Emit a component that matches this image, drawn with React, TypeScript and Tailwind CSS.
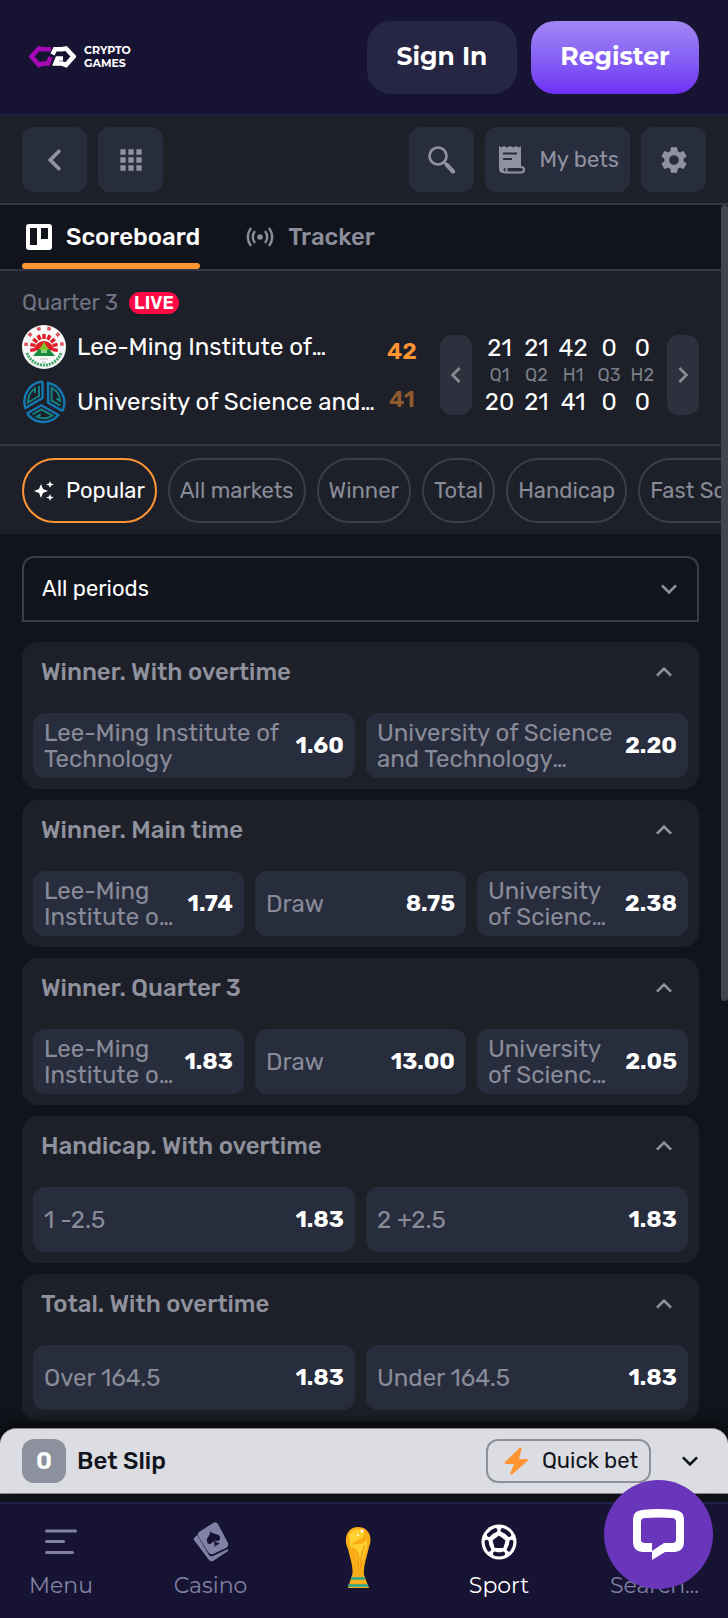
import { useState, type ReactNode } from 'react';
import clsx from 'clsx';
import {
  MdChevronLeft, MdApps, MdSettings,
  MdKeyboardArrowDown, MdKeyboardArrowUp, MdChevronRight,
} from 'react-icons/md';

type Outcome = { name: string; odds: string };
type Market = { title: string; outcomes: Outcome[] };

const HOME = 'Lee-Ming Institute of Technology';
const AWAY = 'University of Science and Technology Taipei';

const MARKETS: Market[] = [
  { title: 'Winner. With overtime', outcomes: [{ name: HOME, odds: '1.60' }, { name: AWAY, odds: '2.20' }] },
  { title: 'Winner. Main time', outcomes: [{ name: HOME, odds: '1.74' }, { name: 'Draw', odds: '8.75' }, { name: AWAY, odds: '2.38' }] },
  { title: 'Winner. Quarter 3', outcomes: [{ name: HOME, odds: '1.83' }, { name: 'Draw', odds: '13.00' }, { name: AWAY, odds: '2.05' }] },
  { title: 'Handicap. With overtime', outcomes: [{ name: '1 -2.5', odds: '1.83' }, { name: '2 +2.5', odds: '1.83' }] },
  { title: 'Total. With overtime', outcomes: [{ name: 'Over 164.5', odds: '1.83' }, { name: 'Under 164.5', odds: '1.83' }] },
];

const PERIODS = [
  { label: 'Q1', home: 21, away: 20 },
  { label: 'Q2', home: 21, away: 21 },
  { label: 'H1', home: 42, away: 41 },
  { label: 'Q3', home: 0, away: 0 },
  { label: 'H2', home: 0, away: 0 },
];

const FILTERS = ['Popular', 'All markets', 'Winner', 'Total', 'Handicap', 'Fast Score'];

function Logo() {
  return (
    <svg viewBox="0 0 48 22" className="w-12 h-[22px]" fill="none" strokeWidth="4.600">
      <path d="M23 3.300H15L11 2.500L3.500 10.500L11 19L15 17.500H20L22.500 11" stroke="#a507b5" />
      <path d="M24.500 8.500L27 3.300H34L38 2.500L45.500 10.500L38 19L34 17.500H27.500L29.500 12.500H35" stroke="#fff" />
    </svg>
  );
}

function HomeCrest() {
  return (
    <svg viewBox="0 0 44 44" className="size-11 shrink-0">
      <circle cx="22" cy="22" r="22" fill="#f7f7f7" />
      <path d="M4 21A18 18 0 0 1 40 21" fill="none" stroke="#dd5560" strokeWidth="3.500" strokeDasharray="3.500 7" />
      <path d="M5 28A18 18 0 0 0 39 28" fill="none" stroke="#3ba365" strokeWidth="3" strokeDasharray="2 1" />
      <path d="M12 26A10 10 0 1 1 32 26L27 25A5.500 5.500 0 0 0 17 25Z" fill="#e01b24" />
      {[-100, -75, -50, -25, 0, 25, 50, 75, 100].map((angle) => (
        <rect key={angle} x="20.300" y="9" width="3.400" height="5" fill="#e01b24" transform={`rotate(${angle} 22 23)`} />
      ))}
      <path d="M22 17L30 30H14Z" fill="#7fc42c" />
      <path d="M11 31L17 24L22 27L27 24L33 31Z" fill="#178a3c" />
      <path d="M19 25H25V28H19Z" fill="#8fd08f" />
      <path d="M18 34H26M20 37H24" stroke="#b9bec2" strokeWidth="1" />
    </svg>
  );
}

function AwayCrest() {
  return (
    <svg viewBox="0 0 44 44" className="size-11 shrink-0" fill="none" strokeWidth="2.400">
      {[0, 120, 240].map((angle) => (
        <g key={angle} transform={`rotate(${angle} 22 22)`}>
          <path d="M20.500 1.500V18L3.500 28A20 20 0 0 1 20.500 1.500" stroke="#1478b4" />
          <path d="M17 6V16L6 22.500A16 16 0 0 1 13 8.500V13" stroke="#14807f" strokeWidth="2" />
        </g>
      ))}
    </svg>
  );
}

function SearchIcon() {
  return (
    <svg viewBox="0 0 28 28" className="size-7" fill="none" stroke="currentColor" strokeLinecap="round">
      <circle cx="10" cy="10" r="8.500" strokeWidth="2.600" />
      <path d="M16 16L19 19" strokeWidth="2.600" />
      <path d="M19 19L25 25.500" strokeWidth="4.200" />
    </svg>
  );
}

function BetsIcon() {
  return (
    <svg viewBox="0 0 26 28" className="w-[26px] h-7 shrink-0">
      <path d="M0 0L2.500 1.500L5 0L8 1.500L11 0L14 1.500L17 0L19.500 1.500L22 0V20H8Q6 20 6 22V27H4Q0 27 0 22Z" fill="currentColor" />
      <path d="M4 7.500H18M4 13H13" stroke="#282d3d" strokeWidth="2" />
      <rect x="3.500" y="21" width="21.500" height="5.500" rx="2.700" fill="#282d3d" stroke="currentColor" strokeWidth="2" />
      <path d="M7.500 21V27" stroke="currentColor" strokeWidth="2" />
    </svg>
  );
}

function BoardIcon() {
  return (
    <svg viewBox="0 0 26 26" className="size-[26px]">
      <rect width="26" height="26" rx="3" fill="currentColor" />
      <path d="M4 4H11V21H4ZM15 4H22V15H15Z" fill="#11141c" />
    </svg>
  );
}

function TrackerIcon() {
  return (
    <svg viewBox="0 0 28 20" className="w-7 h-5" fill="none" stroke="currentColor" strokeWidth="2.400">
      <circle cx="14" cy="10" r="2.800" fill="currentColor" stroke="none" />
      <path d="M5 1Q-1.500 10 5 19M9 4Q4.500 10 9 16M19 4Q23.500 10 19 16M23 1Q29.500 10 23 19" />
    </svg>
  );
}

function SparkIcon() {
  return (
    <svg viewBox="0 0 20 20" className="size-5" fill="currentColor">
      <path d="M7 3L9 8L14 10L9 12L7 17L5 12L0 10L5 8ZM16 0L17 2.500L20 3.500L17 4.500L16 7L15 4.500L12 3.500L15 2.500ZM16 13L17 15.500L20 16.500L17 17.500L16 20L15 17.500L12 16.500L15 15.500Z" />
    </svg>
  );
}

function MenuIcon() {
  return (
    <svg viewBox="0 0 32 26" className="w-8 h-[26px]" stroke="currentColor" strokeWidth="3" strokeLinecap="round">
      <path d="M1.500 2H30.500M1.500 12.500H18.500M1.500 23.500H27.500" />
    </svg>
  );
}

function CasinoIcon() {
  return (
    <svg viewBox="0 0 36 40" className="w-9 h-10" fill="currentColor">
      <path d="M4 13L1 16Q0 17 1 18L16 38Q18 40 20 39L35 29V27L20 34Q17 35 16 33Z" />
      <path d="M6 10L20 1Q23-1 25 2L35 21Q36 24 33 26L20 32Q17 33 15 30L5 14Q4 12 6 10Z" />
      <path d="M17 9C20 13 26 11 27 15C28 19 24 20 22 18C22 20 24 21 27 21L21 25C22 23 22 21 20 19C19 23 14 23 14 19C13 15 18 14 17 9Z" fill="#161432" />
    </svg>
  );
}

function CupIcon() {
  return (
    <svg viewBox="0 0 26 64" className="w-[26px] h-16">
      <path d="M3 23C-2 13 2 1 13 1C24 1 28 12 24 21C22 31 18 40 19 50H7C9 42 5 32 3 23Z" fill="#f9ad16" />
      <path d="M7 49H19L24 62H3Z" fill="#f9ad1c" />
      <path d="M6 52.500H20M3 59.500H23" stroke="#26a68a" strokeWidth="2.500" />
      <path d="M4 9C8 1 19 3 19 8C19 14 9 13 7 19C12 17 18 20 22 13L22 22L14 44C16 33 10 26 5 20Z" fill="#ffd02e" />
      <path d="M7 22C13 25 15 30 13 44M20 20C15 27 17 34 15 44" fill="none" stroke="#f59a14" strokeWidth="1.500" />
      <circle cx="17" cy="5" r="1.500" fill="#fff" />
      <circle cx="13" cy="9" r="1" fill="#fff" />
    </svg>
  );
}

function BallIcon() {
  return (
    <svg viewBox="0 0 36 36" className="size-9">
      <circle cx="18" cy="18" r="17.500" fill="currentColor" />
      <path d="M18 12L24 16.500L22 23.500H14L12 16.500Z" fill="#161432" stroke="#161432" strokeLinejoin="round" />
      {[0, 72, 144, 216, 288].map((angle) => (
        <path key={angle} d="M14 29.700Q18 31 22 29.700" transform={`rotate(${angle} 18 18)`} fill="none" stroke="#161432" strokeWidth="4.200" strokeLinecap="round" />
      ))}
    </svg>
  );
}

function ToolButton({ label, children }: { label: string; children: ReactNode }) {
  return (
    <button aria-label={label} className="size-[65px] shrink-0 rounded-xl bg-[#282d3d] text-[#9092a0] flex items-center justify-center">
      {children}
    </button>
  );
}

function Team({ name, crest }: { name: string; crest: ReactNode }) {
  return (
    <div className="flex items-center gap-[11px] h-11">
      {crest}
      <span className="flex-1 line-clamp-1 text-white">{name}</span>
    </div>
  );
}

function MarketCard({ market }: { market: Market }) {
  const [open, setOpen] = useState(true);
  return (
    <section className="rounded-2xl bg-[#1d2029] px-[11px] pb-[11px]">
      <h2>
        <button
          aria-expanded={open}
          onClick={() => setOpen(!open)}
          className="flex w-full items-center justify-between h-[60px] px-2 font-medium text-[#8f919d]"
        >
          {market.title}
          <MdKeyboardArrowUp className={clsx('size-8', !open && 'rotate-180')} />
        </button>
      </h2>
      {open && (
        <div className="flex gap-[11px] pt-[11px]">
          {market.outcomes.map((o, i) => (
            <button key={i} className="flex flex-1 min-w-0 items-center justify-between gap-2 h-[65px] rounded-xl bg-[#282d3d] px-[11px] text-left">
              <span className="line-clamp-2 leading-[26px] text-[#898b98]">{o.name}</span>
              <span className="text-[23px] font-bold text-white">{o.odds}</span>
            </button>
          ))}
        </div>
      )}
    </section>
  );
}

function NavItem({ label, active, children }: { label: string; active?: boolean; children?: ReactNode }) {
  return (
    <a href="#" className={clsx('flex flex-col items-center gap-2.5', active ? 'text-white' : 'text-[#8180a6]')}>
      <span className="h-10 flex items-center">{children}</span>
      <span className="leading-7">{label}</span>
    </a>
  );
}

export default function App() {
  const [filter, setFilter] = useState('Popular');

  return (
    <div className="h-screen flex flex-col overflow-hidden bg-[#11141c] font-['Rubik','Roboto',sans-serif] text-2xl">
      <header className="flex items-center justify-between h-[116px] shrink-0 pl-7 pr-[29px] bg-[#161432] border-b-2 border-[#211f4b] font-['Montserrat','Inter',sans-serif]">
        <a href="#" className="flex items-center gap-2 text-white text-[11px] font-bold leading-[13px]">
          <Logo />
          <span>CRYPTO<br />GAMES</span>
        </a>
        <div className="flex gap-3.5 text-[25px] font-bold text-white">
          <button className="w-[150px] h-[73px] rounded-3xl bg-[#262543]">Sign In</button>
          <button className="w-[168px] h-[73px] rounded-3xl bg-linear-to-b from-[#a286f2] to-[#702df5]">Register</button>
        </div>
      </header>

      <div className="flex gap-[11px] px-[22px] py-[11px] shrink-0 bg-[#1d2029] border-b-2 border-[#343844]">
        <ToolButton label="Back"><MdChevronLeft className="size-11" /></ToolButton>
        <ToolButton label="All sports"><MdApps className="size-8" /></ToolButton>
        <div className="flex-1" />
        <ToolButton label="Search"><SearchIcon /></ToolButton>
        <button className="flex items-center gap-3.5 h-[65px] rounded-xl bg-[#282d3d] pl-3.5 pr-[11px] text-[22px] text-[#9092a0]">
          <BetsIcon />
          My bets
        </button>
        <ToolButton label="Settings"><MdSettings className="size-8" /></ToolButton>
      </div>

      <div className="flex flex-1 min-h-0">
        <main className="flex-1 min-w-0 overflow-hidden">
          <div className="flex gap-[42px] px-[22px] h-[66px] border-b-2 border-[#343844] font-medium">
            <button className="relative flex items-center gap-3.5 pl-1 text-white">
              <BoardIcon />
              Scoreboard
              <span className="absolute inset-x-0 bottom-0 h-1.5 rounded-full bg-[#ff9533]" />
            </button>
            <button className="flex items-center gap-3.5 pl-1 text-[#8b8d9b]">
              <TrackerIcon />
              Tracker
            </button>
          </div>

          <section className="px-[22px] pt-[18px] pb-5 bg-[#1d2029] border-b-2 border-[#343844]">
            <div className="flex items-center gap-[11px] h-7 mb-2 text-[22px] text-[#717482]">
              Quarter 3
              <span className="h-[22px] px-[5px] rounded-full bg-[#ff0a44] text-white text-lg leading-[22px] font-semibold">LIVE</span>
            </div>
            <div className="flex items-center">
              <div className="flex flex-col gap-[11px] flex-1 min-w-0">
                <Team name={HOME} crest={<HomeCrest />} />
                <Team name={AWAY} crest={<AwayCrest />} />
              </div>
              <div className="flex flex-col gap-5 w-9 text-center text-[23px] leading-7 font-semibold text-[#ff9533]">
                <span>42</span>
                <span className="opacity-50">41</span>
              </div>
              <button aria-label="Previous periods" className="ml-5 w-8 h-20 shrink-0 rounded-xl bg-[#2d303d] text-[#8b8d94] flex items-center justify-center">
                <MdChevronLeft className="size-8 shrink-0" />
              </button>
              <table className="mx-2 text-center text-white">
                <tbody>
                  <tr className="leading-8">{PERIODS.map((p) => <td key={p.label} className="px-[5px]">{p.home}</td>)}</tr>
                  <tr className="text-lg leading-[22px] text-[#7b7d86]">{PERIODS.map((p) => <th key={p.label} className="px-[5px] font-normal">{p.label}</th>)}</tr>
                  <tr className="leading-8">{PERIODS.map((p) => <td key={p.label} className="px-[5px]">{p.away}</td>)}</tr>
                </tbody>
              </table>
              <button aria-label="Next periods" className="w-8 h-20 shrink-0 rounded-xl bg-[#2d303d] text-[#8b8d94] flex items-center justify-center">
                <MdChevronRight className="size-8 shrink-0" />
              </button>
            </div>
          </section>

          <div className="flex gap-[11px] pl-[22px] pt-3 pb-[11px] bg-[#1d2029] text-[22px] overflow-hidden">
            {FILTERS.map((f) => (
              <button
                key={f}
                onClick={() => setFilter(f)}
                className={clsx(
                  'flex items-center gap-3 shrink-0 h-[65px] px-2.5 rounded-full border-2',
                  f === filter ? 'border-[#ff9533] text-white' : 'border-[#3a3d4a] text-[#898b98]',
                )}
              >
                {f === 'Popular' && <SparkIcon />}
                {f}
              </button>
            ))}
          </div>

          <div className="flex flex-col gap-[11px] px-[22px] pt-[22px]">
            <label className="relative block mb-[9px] text-[22px] text-white">
              <select aria-label="Period" className="block w-full h-[66px] px-[18px] appearance-none rounded-t-xl border-2 border-[#3a3d4a] bg-[#11141c]">
                <option>All periods</option>
              </select>
              <MdKeyboardArrowDown className="absolute right-3.5 top-[17px] size-8 text-[#9092a0] pointer-events-none" />
            </label>
            {MARKETS.map((m) => <MarketCard key={m.title} market={m} />)}
          </div>
        </main>
        <div className="w-[7px] shrink-0">
          <div className="h-[796px] rounded-full bg-[#41434d]" />
        </div>
      </div>

      <div className="shrink-0 flex items-center gap-[11px] h-[66px] mb-2 px-[22px] rounded-t-2xl border-y border-[#85868f] bg-[#dcdde3] text-[#11141c] shadow-[0_-4px_16px_#000a]">
        <span className="size-11 rounded-xl bg-[#8d919e] text-white font-semibold flex items-center justify-center">0</span>
        <span className="flex-1 font-medium">Bet Slip</span>
        <button className="flex items-center gap-3.5 h-11 pl-4 pr-[11px] rounded-xl border-2 border-[#8d919e] text-[22px]">
          <svg viewBox="0 0 24 28" className="w-6 h-7" fill="#ff9533"><path d="M16 0.500Q18 0 17.500 2L15 12H23Q24.500 12.500 23.500 14L8 27.500Q6 28.500 6.500 26L10 17H1.500Q0 16.500 1 15Z" /></svg>
          Quick bet
        </button>
        <button aria-label="Expand bet slip" className="ml-3"><MdKeyboardArrowDown className="size-8" /></button>
      </div>

      <nav className="relative shrink-0 flex justify-between h-[116px] px-[29px] pt-[18px] bg-[#161432] border-t-2 border-[#211f4b] font-['Montserrat','Inter',sans-serif] text-[22px]">
        <NavItem label="Menu"><MenuIcon /></NavItem>
        <NavItem label="Casino"><CasinoIcon /></NavItem>
        <a href="#" aria-label="World Cup" className="w-15 flex justify-center pt-1"><CupIcon /></a>
        <NavItem label="Sport" active><BallIcon /></NavItem>
        <NavItem label="Search..." />
        <button aria-label="Chat" className="absolute right-[15px] -top-6 size-[109px] rounded-full bg-[#6935ba] flex items-center justify-center">
          <svg viewBox="0 0 51 51" className="size-[51px]" fill="#fff" fillRule="evenodd">
            <path d="M9 1Q25 -1 42 1Q51 2 51 10V33Q51 42 42 43H32L19 51V43H9Q0 42 0 33V10Q0 2 9 1ZM8 13V31Q8 34 12 34H19V42L31 34H39Q43 34 43 31V13Q43 9 39 9Q26 8 12 9Q8 9 8 13Z" />
          </svg>
        </button>
      </nav>
    </div>
  );
}
